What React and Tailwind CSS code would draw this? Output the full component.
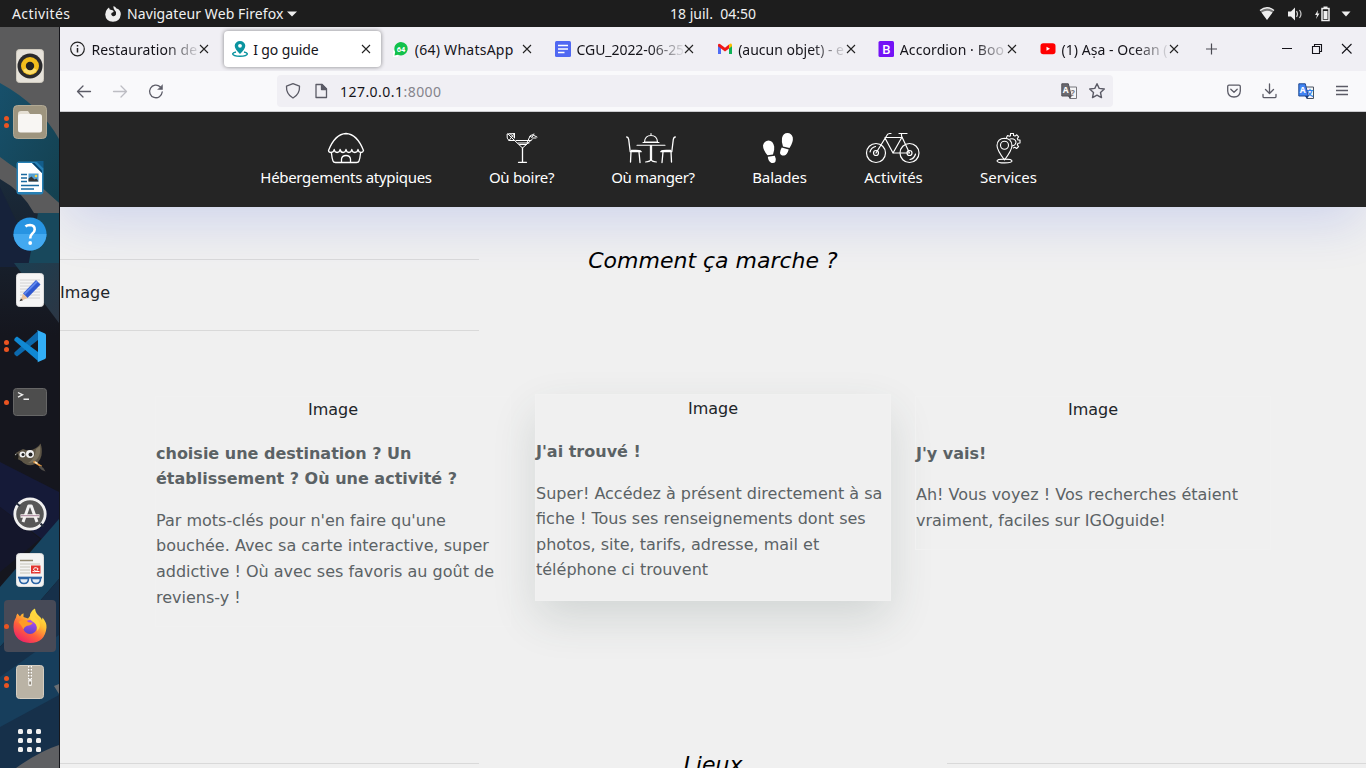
import React from "react";

const ui = "font-['Noto_Sans',sans-serif]";

/* ---------- dock icons ---------- */
const Rhythmbox = () => (
  <svg width="34" height="34" viewBox="0 0 34 34">
    <rect x="3.5" y=".5" width="27" height="33" rx="3" fill="#e6e2da" stroke="#cfcabf" />
    <circle cx="17" cy="17" r="12.5" fill="#2a2a2c" />
    <circle cx="17" cy="17" r="9" fill="#f2bd1c" />
    <path d="M10 21A8 8 0 0 0 24 21L17 17Z" fill="#fbdc6b" />
    <circle cx="17" cy="17" r="4.2" fill="#222" />
  </svg>
);
const Files = () => (
  <svg width="34" height="34" viewBox="0 0 34 34">
    <rect x=".5" y=".5" width="33" height="33" rx="4" fill="#9e957f" stroke="#b1a995" />
    <path d="M5 9q0-3 3-3h7l2 3h9v5H5z" fill="#e5dfd3" />
    <rect x="5" y="9" width="24" height="18.500" rx="2.500" fill="#f8f6f3" />
  </svg>
);
const Writer = () => (
  <svg width="34" height="34" viewBox="0 0 34 34">
    <path d="M6 .5h18L30.500 7v23q0 3.500-3 3.500H6.500q-3 0-3-3V3q0-2.500 2.500-2.500Z" fill="#2680b5" />
    <path d="M23 0h7.500v7.500z" fill="#125d8b" />
    <path d="M5 2h14l10 10v19H5z" fill="#fff" />
    <path d="M19 2l10 10V9.500L21.500 2z" fill="#08426c" />
    <path d="M8 13.500h6M8 17h6M8 20.500h6M8 24.500h18M8 28h13" stroke="#1a6aa0" strokeWidth="1.300" />
    <rect x="15.500" y="12.500" width="10" height="8" fill="#529ed0" />
    <path d="M15.500 20.500v-3l3-2 3 3 2-1 2 3z" fill="#373635" />
    <circle cx="23" cy="15" r="1.300" fill="#f8d246" />
  </svg>
);
const Help = () => (
  <svg width="34" height="34" viewBox="0 0 34 34">
    <circle cx="17" cy="17" r="16.500" fill="#2794e2" />
    <path d="M.5 17A16.500 16.500 0 0 0 33.500 17Z" fill="#43a9f0" />
    <path d="M12.500 9.500Q14 8 17 8q4.700.2 4.700 4.500 0 2.500-2.500 4.200Q17.200 18.300 17.200 21.500" fill="none" stroke="#fff" strokeWidth="2.600" />
    <circle cx="17.200" cy="26" r="1.900" fill="#fff" />
  </svg>
);
const Editor = () => (
  <svg width="34" height="34" viewBox="0 0 34 34">
    <rect x="3.500" y=".5" width="27" height="33" rx="3" fill="#f5f5f5" stroke="#ddd" />
    <path d="M7 7h20M7 10h20M7 13h20M7 16h20M7 19h20M7 22h20M7 25h20" stroke="#d2d2d2" />
    <path d="M10 20.500L23 7l4.500 4.500L14.500 25z" fill="#2f58d0" />
    <path d="M11.500 21L24 8.500" stroke="#5f88ee" strokeWidth="1.800" />
    <path d="M10 20.500l4.500 4.500L7.500 28z" fill="#e8c29d" />
    <path d="M8 25.500l2 1.800-3.500 1z" fill="#333" />
  </svg>
);
const Code = () => (
  <svg width="34" height="34" viewBox="0 0 34 34">
    <path d="M1.300 23.500Q1 25 2 26l2 1.500L25 11V2z" fill="#0c69ad" />
    <path d="M1.300 11.500Q1 10 2 9L4 7.500 25 23v9z" fill="#1088d3" />
    <path d="M24 1l8 3.500q1 .7 1 1.800v22q0 1-1 1.600L24.500 33.200Q25 32.500 25 30V4q0-2-1-3Z" fill="#32aef6" />
  </svg>
);
const TerminalIcon = () => (
  <svg width="34" height="34" viewBox="0 0 34 34">
    <rect x=".5" y="3.500" width="33" height="27" rx="3" fill="#4d4d4d" stroke="#666" />
    <path d="M5 7.500l4.500 2.300L5 12.100M10.500 14.300h5.500" fill="none" stroke="#eee" strokeWidth="1.400" />
  </svg>
);
const Gimp = () => (
  <svg width="34" height="34" viewBox="0 0 34 34">
    <path d="M2 12.500Q6 10 10 8q7 3 13-1Q26 5 27.500 2.500q2 5 1 12-2 8-9 9.500-7 1-11-4l-6-3z" fill="#5d5546" />
    <path d="M23 8l4-3q1 7-2 12-4 5-10 5 7-4 8-14z" fill="#7b725e" />
    <circle cx="9.500" cy="13.500" r="3" fill="#f2f2f2" /><circle cx="17" cy="13" r="4" fill="#f2f2f2" />
    <circle cx="10" cy="13.500" r="1.500" fill="#222" /><circle cx="17.500" cy="13.500" r="2" fill="#222" />
    <ellipse cx="3" cy="15.500" rx="2.500" ry="3.200" fill="#191919" />
    <path d="M2 14l1.500-1" stroke="#bbb" />
    <path d="M20.500 20.500l8 5" stroke="#e99b42" strokeWidth="1.800" />
    <path d="M22 21l2.500 1.500" stroke="#f7e3c2" strokeWidth="1.500" />
    <path d="M27 24.500q4 2 5.500 6-4-1-6.500-4z" fill="#54514b" />
  </svg>
);
const Updater = () => (
  <svg width="34" height="34" viewBox="0 0 34 34">
    <circle cx="17" cy="17" r="15.200" fill="#575757" stroke="#f0f0f0" strokeWidth="2.800" />
    <path d="M3 6l4 3M27.500 26.500l3 3" stroke="#222a3a" strokeWidth="2" />
    <path d="M10 25L15.700 9h2.600L24 25" fill="none" stroke="#f2f2f2" strokeWidth="3" strokeLinejoin="round" />
    <path d="M7.500 19h19" stroke="#f4f1ee" strokeWidth="3.500" /><path d="M8 18.700h18" stroke="#a4809b" strokeWidth="1" />
  </svg>
);
const Evince = () => (
  <svg width="34" height="34" viewBox="0 0 34 34">
    <rect x="3.500" y=".5" width="27" height="33" rx="3" fill="#f4f4f3" stroke="#ddd" />
    <path d="M7 7.500h13" stroke="#938a70" strokeWidth="1.500" />
    <path d="M7 11h20M7 14h10M7 17h10M7 20h10" stroke="#c6c3ba" strokeWidth="1.200" />
    <rect x="18" y="12.500" width="9.500" height="8" fill="#e2342e" />
    <path d="M19.500 18.500q5 1 5.500-3-4-2-4.500 1 2 3 6 2" stroke="#fff" fill="none" />
    <path d="M5 24.500h24" stroke="#2c65a6" strokeWidth="1.700" />
    <path d="M6.500 25.500h9q0 5-4.500 5t-4.500-5zM18.500 25.500h9q0 5-4.500 5t-4.500-5z" fill="#e3ecf5" stroke="#2c65a6" strokeWidth="1.600" />
  </svg>
);
const Firefox = () => (
  <svg width="34" height="36" viewBox="0 0 34 36">
    <defs>
      <linearGradient id="fx" x1=".85" y1=".05" x2=".25" y2="1">
        <stop offset="0" stopColor="#fff14a" /><stop offset=".35" stopColor="#ffbd32" />
        <stop offset=".65" stopColor="#ff603c" /><stop offset="1" stopColor="#ef1f69" />
      </linearGradient>
      <linearGradient id="globe" x1=".6" y1="0" x2=".4" y2="1">
        <stop offset="0" stopColor="#b54bf1" /><stop offset="1" stopColor="#5a43c8" />
      </linearGradient>
    </defs>
    <path d="M3 9.500q.2-2.500 1.500-4L7 8.500Q8 6 10.500 5.200V9L15 10.500 17 8q0-4.500 5-7.500.5 4.500 4 7.500 2.500 2 3 4l.5-2.500Q34 15 33.500 19.500 32 35 17 35 1 34 .5 19 .5 13 3 9.500Z" fill="url(#fx)" />
    <circle cx="17" cy="19" r="6.900" fill="url(#globe)" />
    <path d="M5.500 14q5-4.500 10 .2l4.500.6q-2 3-6 3-3 1-3.500 3.500-2-4-5-7.300Z" fill="#ff9c25" />
    <path d="M17 8q-.500 4 4 6.500 4 3.500 3 8.500 4-3 2.500-9-1.500-2.500-4-4.500-2-2-2-5-3.500 1-3.500 3.500Z" fill="#ffd43f" />
  </svg>
);
const Archive = () => (
  <svg width="34" height="34" viewBox="0 0 34 34">
    <rect x="3.500" y=".5" width="27" height="33" rx="3" fill="#bab3a5" stroke="#d5cec2" />
    <path d="M17 1v13" stroke="#fff" strokeWidth="4" strokeDasharray="1.500 1.500" />
    <path d="M17 1v13" stroke="#91897a" />
    <rect x="15.300" y="14" width="3.500" height="7" rx="1" fill="#f4f3ef" />
    <rect x="16.300" y="16.500" width="1.600" height="3" fill="#82796a" />
  </svg>
);

const dockItems = [
  { I: Rhythmbox, n: 0 }, { I: Files, n: 2 }, { I: Writer, n: 0 }, { I: Help, n: 0 },
  { I: Editor, n: 0 }, { I: Code, n: 2 }, { I: TerminalIcon, n: 1 }, { I: Gimp, n: 0 },
  { I: Updater, n: 0 }, { I: Evince, n: 0 }, { I: Firefox, n: 1, active: true }, { I: Archive, n: 2 },
];

function Dock() {
  return (
    <aside className="relative flex h-full w-[60px] shrink-0 flex-col border-r border-[#16161b] bg-[#12141f] pt-[11px]">
      <svg className="absolute inset-0" width="59" height="741" viewBox="0 0 59 741" preserveAspectRatio="none">
        <defs>
          <linearGradient id="teal" x1="0" y1="0" x2="1" y2="1">
            <stop offset="0" stopColor="#17506b" /><stop offset="1" stopColor="#14404f" />
          </linearGradient>
          <linearGradient id="night" x1="0" y1="0" x2="0" y2="1">
            <stop offset="0" stopColor="#1a2a3a" /><stop offset="1" stopColor="#15161e" />
          </linearGradient>
          <linearGradient id="ray" x1="0" y1="0" x2="1" y2="1">
            <stop offset="0" stopColor="#1b3f52" /><stop offset="1" stopColor="#2c3644" />
          </linearGradient>
        </defs>
        <rect width="59" height="741" fill="#15161e" />
        <rect width="59" height="190" fill="#5b5b5c" />
        <path d="M0 56Q40 78 59 112v64Q30 148 0 132z" fill="url(#teal)" />
        <path d="M0 130Q28 150 59 176v42L0 190z" fill="#5b5b5c" />
        <path d="M0 152Q22 164 34 186l25 2v120H0z" fill="url(#night)" />
        <path d="M0 160L38 240H0z" fill="#16223a" />
        <path d="M38 186h21v54H28z" fill="#18485c" />
        <path d="M14 236h45v60Z" fill="url(#ray)" />
        <path d="M0 435l59 30v60L0 480z" fill="#151a38" />
        <path d="M0 480l40 32L0 545z" fill="#14162b" />
        <path d="M0 560L59 492v60L0 620z" fill="#174460" />
        <path d="M0 620L59 552v189H0z" fill="#16304a" />
        <path d="M0 650l59-42v60L0 700z" fill="#173e5c" />
        <path d="M16 741Q40 724 59 718v23z" fill="#5f6063" />
        <path d="M54 659l5-2v10z" fill="#6b6e72" />
      </svg>
      {dockItems.map(({ I, n, active }, i) => (
        <div key={i} className="relative flex h-14 w-full items-center">
          <div className={"ml-1 flex h-[52px] w-[52px] items-center rounded " + (active ? "bg-[#474a57]" : "")}>
            <div className="flex w-[9px] flex-col items-start gap-[2px]">
              {Array.from({ length: n }).map((_, k) => (
                <span key={k} className="h-[5px] w-[5px] rounded-full bg-[#ea5421]" />
              ))}
            </div>
            <I />
          </div>
        </div>
      ))}
      <div className="relative mt-[2px] flex h-14 items-center pl-[18px]">
        <div className="grid grid-cols-3 gap-[4px]">
          {Array.from({ length: 9 }).map((_, k) => (
            <span key={k} className="h-[5px] w-[5px] rounded-[1.5px] bg-[#f1f1f1]" />
          ))}
        </div>
      </div>
    </aside>
  );
}

function TopBar() {
  return (
    <header className={"flex h-[27px] items-center bg-[#1d1d1d] text-[14px] text-[#f0f0f0] " + ui}>
      <span className="w-[93px] pl-3 tracking-[0.4px]">Activités</span>
      <div className="flex w-[577px] items-center pl-[12px]">
        <svg width="16" height="16" viewBox="0 0 16 16" className="mr-[6px]">
          <path d="M2.300 3L4 1.500 4.700 3.500l3 .7Q9 5 8.500 6L6.500 7q-1 2 1 3 2.500.7 3.500-1.500.7-3-1.500-4.500-1.500-1.500-1-4 2 .7 3 2.500l1.500.5Q16 5 15.800 8.500 15 15.500 8 15.800.7 15.300.2 8.500.3 5 2.300 3Z" fill="#eee" />
        </svg>
        <span className="tracking-[0.1px]">Navigateur Web Firefox</span>
        <svg width="10" height="6" viewBox="0 0 10 6" className="ml-[4px]"><path d="M0 .5h10L5 5.500z" fill="#eee" /></svg>
      </div>
      <span className="flex-1 whitespace-pre">18 juil.  04:50</span>
      <div className="flex items-center pr-[12px]">
        <svg width="96" height="16" viewBox="0 0 96 16" fill="#eee">
          <path d="M2 4.500Q9 -1 16 4.500L9 13.500z" fill="#777" /><path d="M3.500 6.500Q9 3 14.500 6.500L9 14z" />
          <path d="M2 4.500Q9 -1 16 4.500" fill="none" stroke="#eee" strokeWidth="1.300" />
          <path d="M30 5.500h3l4-4v13l-4-4h-3z" /><path d="M38.500 5q2 3 0 6M41.500 4q3 4 0 8" fill="none" stroke="#ccc" strokeWidth="1.200" />
          <path d="M60 4l-3 5h2l-1 4 3.500-5.500h-2z" />
          <path d="M64 2.500h7v12h-7z" fill="none" stroke="#eee" strokeWidth="1.500" /><path d="M65.500 5h4v8h-4zM65.500 .5h4v2h-4z" />
          <path d="M83.500 5.500h9l-4.500 5z" />
        </svg>
      </div>
    </header>
  );
}

/* ---------- browser chrome ---------- */
const favicons = {
  info: (
    <svg width="16" height="16" viewBox="0 0 16 16"><circle cx="7.500" cy="8" r="6.800" fill="none" stroke="#222" strokeWidth="1.200" /><path d="M7.500 7v4.500M7.500 4v1.500" stroke="#222" strokeWidth="1.500" /></svg>
  ),
  guide: (
    <svg width="16" height="16" viewBox="0 0 16 16"><path d="M8 13Q2.700 8 2.700 4.800A5.300 4.800 0 0 1 13.300 4.800Q13.300 8 8 13Z" fill="#0b94a0" /><circle cx="8" cy="4.800" r="1.900" fill="#fff" /><path d="M4 11Q.7 11.700.7 13 1 15 8 15.200 15 15 15.300 13q0-1.300-3.300-2" fill="none" stroke="#0b94a0" strokeWidth="1.500" /></svg>
  ),
  whatsapp: (
    <svg width="16" height="16" viewBox="0 0 16 16"><path d="M0 9h5v7H0z" fill="#fff" /><path d="M8 1a6.700 6.700 0 1 1-3 12.700L1.500 14.500 2.200 11A6.700 6.700 0 0 1 8 1Z" fill="#12c14b" /><text x="8" y="10.500" textAnchor="middle" fontSize="7.500" fontWeight="700" fill="#fff" fontFamily="Roboto, sans-serif">64</text></svg>
  ),
  doc: (
    <svg width="16" height="16" viewBox="0 0 16 16"><rect width="16" height="16" rx="1.500" fill="#5068f2" /><path d="M3 4.500h10M3 8h10M3 11.500h6.500" stroke="#fff" strokeWidth="1.500" /></svg>
  ),
  gmail: (
    <svg width="16" height="16" viewBox="0 0 16 16"><path d="M1 4v9h3V7z" fill="#4f6cf5" /><path d="M12 7v6h3V4z" fill="#0fb257" /><path d="M12 3.500v4l3-2.300V4q-.5-2-2-1.200z" fill="#fbbc04" /><path d="M1 4Q1.300 2 3 3l5 3.800L12 3.500v4L8 10.500 1 5.200z" fill="#f01818" /></svg>
  ),
  boot: (
    <svg width="16" height="16" viewBox="0 0 16 16"><rect x=".5" width="15.500" height="16" rx="1.500" fill="#7412f6" /><text x="8.300" y="12.700" textAnchor="middle" fontSize="13" fill="#fff" fontFamily="Roboto, sans-serif" fontWeight="500">B</text></svg>
  ),
  yt: (
    <svg width="16" height="16" viewBox="0 0 16 16"><rect x=".5" y="2.300" width="15" height="11" rx="2.800" fill="#f00" /><path d="M6.500 5.800v4L10 7.800z" fill="#fff" /></svg>
  ),
};
const tabs = [
  { icon: "info", label: "Restauration de", fade: true, track: "tracking-[0.1px]" },
  { icon: "guide", label: "I go guide", active: true, track: "tracking-[-0.1px]" },
  { icon: "whatsapp", label: "(64) WhatsApp", track: "tracking-[0.25px]" },
  { icon: "doc", label: "CGU_2022-06-25", fade: true, track: "tracking-[-0.05px]" },
  { icon: "gmail", label: "(aucun objet) - e", fade: true, track: "tracking-[0px]" },
  { icon: "boot", label: "Accordion · Boo", fade: true, track: "tracking-[0.1px]" },
  { icon: "yt", label: "(1) Aṣa - Ocean (", fade: true, track: "tracking-[0.05px]" },
];

function TabStrip() {
  return (
    <div className={"flex h-11 items-center bg-[#f0eff4] text-[14px] text-[#15141a] " + ui}>
      {tabs.map((t) => (
        <div key={t.icon} className="flex h-11 w-[161.67px] shrink-0 items-center px-[2px]">
          <div className={"flex h-9 w-[157px] items-center rounded pl-[8px] " + (t.active ? "bg-white shadow-[0_0_4px_rgba(0,0,0,0.45)]" : "")}>
            {favicons[t.icon]}
            <span className={"ml-[5.5px] w-[107px] overflow-hidden whitespace-nowrap " + t.track + (t.fade ? " [mask-image:linear-gradient(to_right,black_74px,transparent_110px)]" : "")}>{t.label}</span>
            <svg width="10" height="10" viewBox="0 0 10 10" className="ml-[0.5px]"><path d="M1 1l8 8M9 1l-8 8" stroke="#222" strokeWidth="1.100" /></svg>
          </div>
        </div>
      ))}
      <svg width="174" height="20" viewBox="1192 0 174 20" fill="none" stroke="#15141a">
        <path d="M1206 10h11M1211.500 4.500v11" stroke="#4a4a52" strokeWidth="1.200" />
        <path d="M1282 9.500h10M1312.500 7.500h7v7h-7zM1314.500 7.500v-2h7v7h-2M1342 5l9.500 9.500M1351.500 5l-9.500 9.500" strokeWidth="1.100" />
      </svg>
    </div>
  );
}

const Translate = ({ color }) => (
  <svg width="17" height="17" viewBox="0 0 17 17">
    <path d="M7 4h8.500v11.500H9z" fill="#f4f4f6" stroke={color ? "#4a5261" : "#77767c"} />
    <text x="11.800" y="12.500" textAnchor="middle" fontSize="8" fontWeight="700" fontFamily="Noto Sans, Noto Sans CJK SC, sans-serif" fill={color ? "#2f80ed" : "#77767c"}>{color ? "文" : "?"}</text>
    <path d="M.8.8h6.500l3 12.200H.8z" fill={color ? "#4184f3" : "#6b6a70"} stroke={color ? "#234a91" : "#525157"} />
    <text x="4.700" y="9.800" textAnchor="middle" fontSize="8.500" fontWeight="700" fontFamily="Noto Sans, sans-serif" fill="#fff">A</text>
    <path d="M7 13h3.500l-1.500 3z" fill={color ? "#193c7b" : "#525157"} />
  </svg>
);

function Toolbar() {
  return (
    <div className="flex h-[41px] items-center border-b border-[#cbcbcf] bg-[#f9f9fb]">
      <svg width="217" height="20" viewBox="60 0 217 20" fill="none" stroke="#5b5b66" strokeWidth="1.300" strokeLinecap="round" strokeLinejoin="round">
        <path d="M77.500 10.500h13M83 5l-5.500 5.500L83 16" />
        <path d="M113.500 10.500h13M121 5l5.500 5.500L121 16" stroke="#bdbdc3" />
        <path d="M162.200 11a6.300 6.300 0 1 1-2-5.200" /><path d="M162.500 4v4.500H158z" fill="#5b5b66" strokeWidth=".5" />
      </svg>
      <div className={"flex h-8 w-[836px] items-center rounded bg-[#f0eff4] pl-[8px] pr-[7px] text-[14px] " + ui}>
        <svg width="55" height="18" viewBox="0 0 55 18" fill="none" stroke="#5b5b66" strokeWidth="1.300" strokeLinejoin="round">
          <path d="M8 1.700l6.500 2.500Q15 12 8 16 1 12 1.500 4.200Z" />
          <path d="M31 2.500h6l4.500 4.500v8.500H31zM36.500 2.500v5h5" /><path d="M37 2.500l4.500 4.500H37z" fill="#5b5b66" />
        </svg>
        <span className="flex-1 tracking-[0.46px] text-[#15141a]">127.0.0.1<span className="text-[#85848c]">:8000</span></span>
        <Translate />
        <svg width="18" height="18" viewBox="0 0 18 18" className="ml-[10px]"><path d="M9 1.700l2.200 4.700 5.100.6-3.800 3.500 1 5.100L9 13.100l-4.500 2.500 1-5.100L1.700 7l5.100-.6z" fill="none" stroke="#5b5b66" strokeWidth="1.400" strokeLinejoin="round" /></svg>
      </div>
      <div className="flex flex-1 items-center justify-end pr-[17px]">
        <svg width="52" height="18" viewBox="0 0 52 18" fill="none" stroke="#5b5b66" strokeWidth="1.300" strokeLinecap="round" strokeLinejoin="round">
          <path d="M1.700 4.500q0-1.300 1.300-1.300h10q1.300 0 1.300 1.300V9Q14 15 8 15T1.700 9zM4.800 7.300L8 10.300l3.200-3" />
          <path d="M43.500 2v9M39.500 7.500l4 4 4-4M37 12.500v2q0 1.200 1.200 1.200h10.600q1.200 0 1.200-1.200v-2" />
        </svg>
        <div className="ml-[20px]"><Translate color /></div>
        <svg width="14" height="14" viewBox="0 0 14 14" className="ml-[20px]"><path d="M1 2.500h12M1 6.500h12M1 10.500h12" stroke="#5b5b66" strokeWidth="1.300" /></svg>
      </div>
    </div>
  );
}

/* ---------- page navigation ---------- */
const navStroke = { fill: "none", stroke: "#fff", strokeWidth: 1.3, strokeLinecap: "round", strokeLinejoin: "round" };
const Hut = () => (
  <svg width="38" height="32" viewBox="0 0 38 32" {...navStroke}>
    <path d="M1.500 18.500Q8 2 19 1.500 30 2 36.500 18.500 36 20.500 34 20.500q-2.500 0-3-3-.5 3-3.200 3t-3-3q-.5 3-2.900 3t-2.900-3q-.5 3-2.900 3t-3-3q-.5 3-3 3t-2.900-3q-.5 3-3.200 3Q1.700 20.500 1.500 18.500Z" />
    <path d="M4.500 21.500q.5 5 1.500 7.500.5 1.500 2.500 1.500h21q2 0 2.500-1.500 1-2.500 1.500-7.500M14.500 30v-3q.5-3.500 4.500-3.500t4.500 3.500v3" />
  </svg>
);
const Cocktail = () => (
  <svg width="32" height="32" viewBox="0 0 32 32" {...navStroke} strokeWidth="1">
    <path d="M1.500 2l7-.5L3 8.500l-1.500-2zM2 2l6 6M8.500 1.500V6M4 1.500l4 4M3 8.500h5M7 7l9.500 9L26.500 7M10 8.500h15M12 11h11M13.500 12.500h7M21 11l3-7 2 1.500L27 3l4 2M24 4q3-2 4-2M27 6h3" />
    <path d="M16.500 16v14M12.500 30.300h8" strokeWidth="1.300" />
  </svg>
);
const Table = () => (
  <svg width="52" height="32" viewBox="0 0 52 32" {...navStroke} className="-ml-[5px]">
    <path d="M1.700 5q1.500 0 2 2.500l1.500 12.200h11M6 19.500L5.500 30M14 20l1 10.500M6.500 18.500q8-.5 9 .5" />
    <path d="M50.300 5q-1.500 0-2 2.500l-1.500 12.200h-11M46 19.500l.5 10.500M38 20l-1 10.500M45.500 18.500q-8-.5-9 .5" />
    <path d="M12 13.300h28M18 10.500h16M19.500 10q.5-6.500 6.500-6.500t6.500 6.500zM26 1.500v2M25.400 14v13.500M26.600 14v13.500M20.500 30q5-.5 5.500-2.500.5 2 5.500 2.500" strokeWidth="1.100" />
  </svg>
);
const Steps = () => (
  <svg width="32" height="32" viewBox="0 0 32 32" fill="#fff" className="-ml-[3px]">
    <path d="M6.500 8.500q4.500 0 5.700 6 .5 3.500-1.200 8l-5.500.8Q1 18 1 13.500 2 8.800 6.500 8.500ZM5.800 24.800l7-1q1.500 3 .7 5.700-1 2-4 1.500-3.200-1.200-3.700-6.200Z" />
    <path d="M25.500 1q-4.300 0-5.500 5-.7 4 1 8.500l6.500 1.500q4-6 3.300-10.500Q29.500 1.200 25.500 1ZM19.700 15.500l7 2q-1.500 5.500-4.500 6-4 .3-4.200-2.800.3-2.700 1.700-5.200Z" />
  </svg>
);
const Bike = () => (
  <svg width="56" height="32" viewBox="0 0 56 32" {...navStroke} strokeWidth="1.200" className="-ml-px">
    <circle cx="11" cy="21" r="9.500" /><circle cx="44.500" cy="21" r="9.500" /><circle cx="11" cy="21" r="2.500" /><circle cx="44.500" cy="21" r="2.500" />
    <path d="M11 21L21.500 4q1-2.500 3-2.500h1.500M20 6L28 21h16.500L36.500 4M20 5.500h17.500M28 21l8.500-15M36.500 4V2M34 1.500h8M5 20q1-4.500 5.500-5.500M50.500 22q-1 4.500-5.500 5.500" />
  </svg>
);
const Pin = () => (
  <svg width="28" height="32" viewBox="0 0 28 32" {...navStroke} strokeWidth="1.100">
    <path d="M9.500 28Q2 18 2 13.500 2.500 6.500 9.500 6.300 16.500 6.500 17 13.500 17 18 9.500 28Z" /><circle cx="9.500" cy="13.300" r="4" />
    <ellipse cx="9.500" cy="29" rx="7.500" ry="1.900" />
    <path d="M11.500 5.500l1-2 2 .8 1-.6V1.500h3v2l1.500.6 1.800-1.300 1.800 2-1.300 1.700.7 1.500h2v3l-2 .3-.7 1.500 1.300 1.700-2 2-1.800-1.200-1.500.6" strokeWidth="1.100" />
    <path d="M15 7q5-1 6 3-.3 3.500-4 4" />
  </svg>
);
const navItems = [
  ["Hébergements atypiques", Hut, "w-[172px] tracking-[-0.3px]"], ["Où boire?", Cocktail, "w-[65px] tracking-[-0.3px]"],
  ["Où manger?", Table, "w-[84px] tracking-[-0.35px]"], ["Balades", Steps, "w-[55px] tracking-[-0.1px]"],
  ["Activités", Bike, "w-[59px] tracking-[0px]"], ["Services", Pin, "w-[57px] tracking-[-0.05px]"],
];

function SiteNav() {
  return (
    <nav className="relative flex h-[95px] shrink-0 gap-[57px] bg-[#252525] pl-[200px] pt-5 shadow-[0_20px_50px_-4px_rgba(30,60,220,0.15)]">
      {navItems.map(([label, Icon, w]) => (
        <a key={label} className={"flex flex-col items-center whitespace-nowrap font-['Noto_Sans',sans-serif] text-[15px] leading-6 text-white " + w}>
          <Icon />
          <span className="mt-px">{label}</span>
        </a>
      ))}
    </nav>
  );
}

/* ---------- page content ---------- */
const steps = [
  { title: "choisie une destination ? Un établissement ? Où une activité ?", text: "Par mots-clés pour n'en faire qu'une bouchée. Avec sa carte interactive, super addictive ! Où avec ses favoris au goût de reviens-y !" },
  { title: "J'ai trouvé !", text: "Super! Accédez à présent directement à sa fiche ! Tous ses renseignements dont ses photos, site, tarifs, adresse, mail et téléphone ci trouvent", raised: true },
  { title: "J'y vais!", text: "Ah! Vous voyez ! Vos recherches étaient vraiment, faciles sur IGOguide!" },
];

function Page() {
  return (
    <main className="flex h-[656px] flex-col overflow-hidden bg-[#f0f0f0] font-['DejaVu_Sans',sans-serif] text-base leading-[25.6px] text-[#212529]">
      <SiteNav />
      <section className="flex h-[188px] shrink-0 pt-[52px]">
        <div className="h-[72px] w-[419px] border-y border-[#d9d9d9] pt-[20px]">Image</div>
        <h2 className="-mt-[13px] w-[468px] text-center text-[22px] italic leading-[30px] text-black">Comment ça marche ?</h2>
      </section>
      <section className="mx-auto flex h-[357px] w-[1140px] shrink-0 items-start">
        {steps.map((s) => (
          <div key={s.title} className="w-[380px] px-3">
            <article className={"border border-[#f1f1f1] " + (s.raised ? "-mt-px h-[207px] pt-px shadow-[0_18px_42px_-2px_rgba(50,75,70,0.16)]" : "mt-px")}>
              <p className={"text-center " + (s.raised ? "mb-[17px]" : "mb-[18px]")}>Image</p>
              <h3 className={"font-bold text-[#5b6265] " + (s.raised ? "mb-[16.4px]" : "mb-4")}>{s.title}</h3>
              <p className="mb-[16px] text-[#5b6265]">{s.text}</p>
            </article>
          </div>
        ))}
      </section>
      <section className="flex shrink-0 items-start pt-[11px]">
        <hr className="w-[419px] border-[#d9d9d9]" />
        <h2 className="-mt-[13px] w-[468px] text-center text-[22px] italic leading-[30px] text-black">Lieux</h2>
        <hr className="w-[419px] border-[#d9d9d9]" />
      </section>
    </main>
  );
}

export default function App() {
  return (
    <div className="flex h-[768px] w-[1366px] flex-col overflow-hidden">
      <TopBar />
      <div className="flex h-[741px]">
        <Dock />
        <div className="flex w-[1306px] flex-col">
          <TabStrip />
          <Toolbar />
          <Page />
        </div>
      </div>
    </div>
  );
}
